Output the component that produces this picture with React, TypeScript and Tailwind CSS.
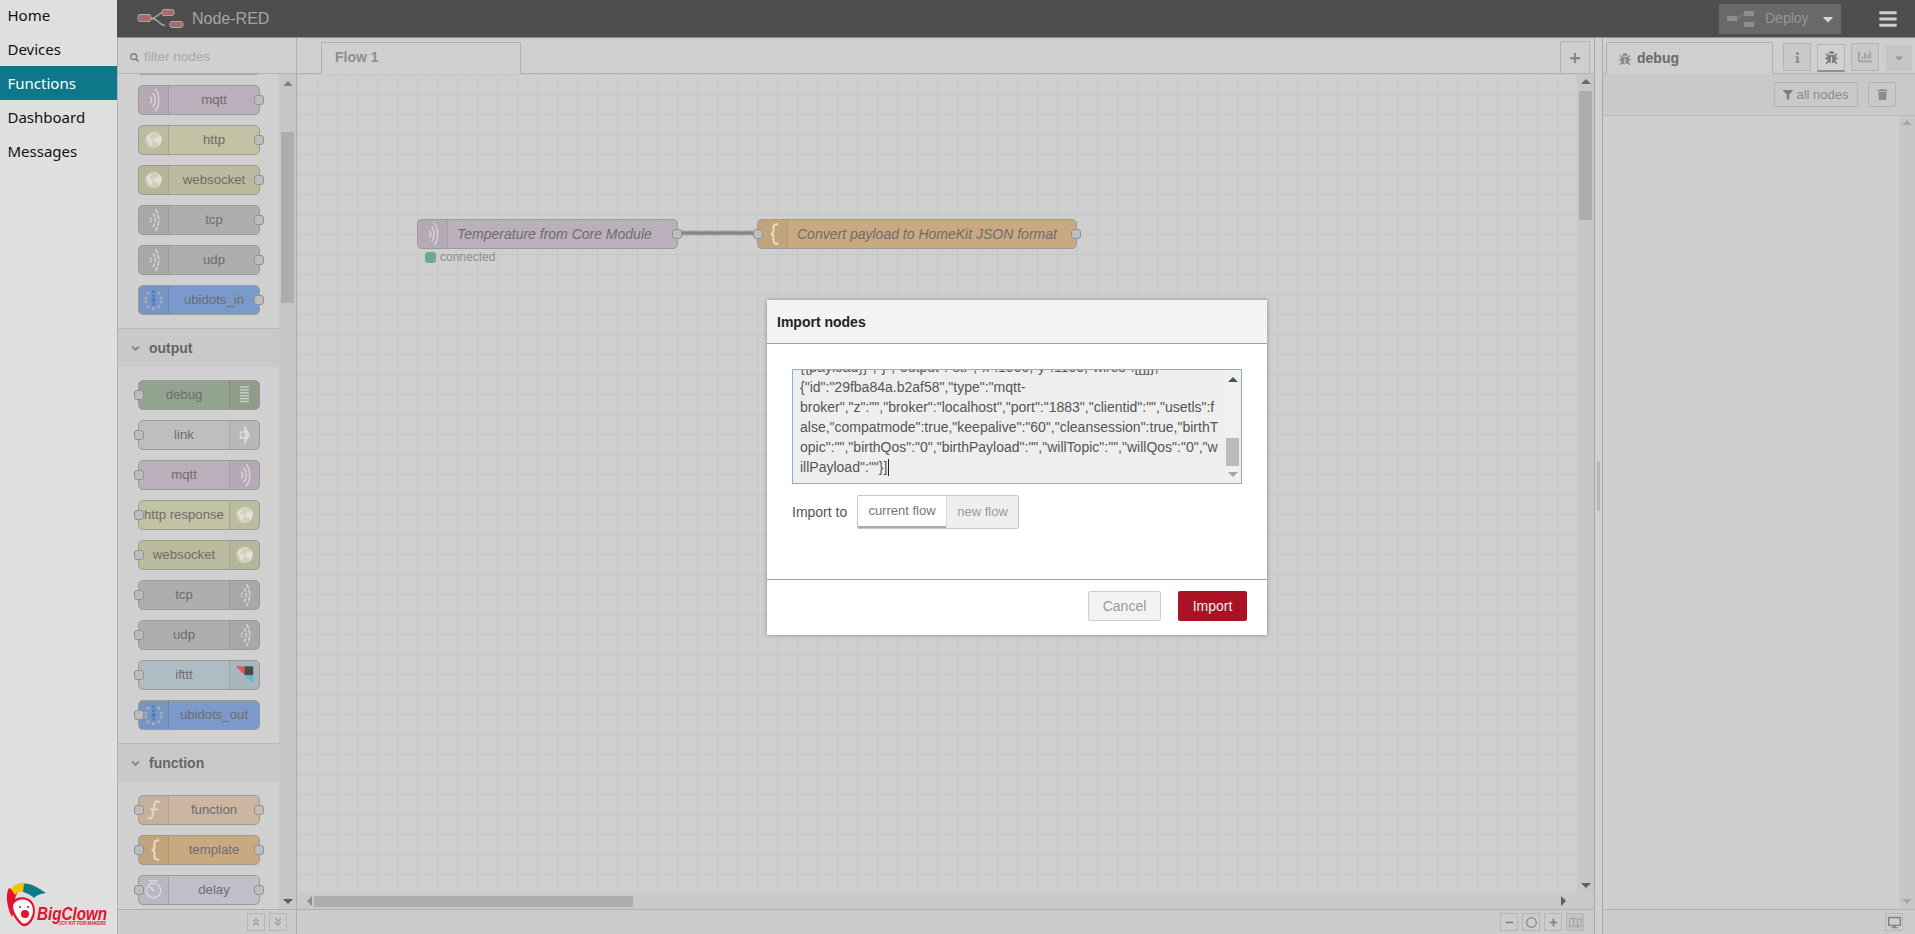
import React from "react";
import {
  FaAngleDoubleDown,
  FaAngleDoubleUp,
  FaAngleDown,
  FaBars,
  FaBug,
  FaCaretDown,
  FaChartBar,
  FaDesktop,
  FaFilter,
  FaInfo,
  FaMinus,
  FaPlus,
  FaRegCircle,
  FaRegMap,
  FaSearch,
  FaTrash,
} from "react-icons/fa";

type IconName = "mqtt" | "globe" | "tcp" | "dots" | "debug" | "link" | "ifttt" | "fn" | "brace" | "delay";

function NodeIcon({ name }: { name: IconName }) {
  if (name === "mqtt") {
    return (
      <svg width="30" height="30" viewBox="0 0 30 30" fill="none" stroke="#d8d4d8" strokeLinecap="round" strokeWidth="1.500">
        <path d="M12 12c1.500 2 1.500 4 0 6" />
        <path d="M14.500 8c3 4 3 10 0 14" />
        <path d="M17 4c4.500 6 4.500 16 0 22" />
      </svg>
    );
  }
  if (name === "tcp") {
    return (
      <svg width="30" height="30" viewBox="0 0 30 30" fill="none" stroke="#d4d4d4" strokeWidth="1.700">
        <path d="M11.500 12.500c1.500 1.500 1.500 3.500 0 5" strokeDasharray="2 1" />
        <path d="M14.500 8c3 4 3 10 0 14" strokeDasharray="4 1.500" />
        <path d="M17 4c4.500 6 4.500 16 0 22" strokeDasharray="5 1.500" />
      </svg>
    );
  }
  if (name === "globe") {
    return (
      <svg width="30" height="30" viewBox="0 0 30 30">
        <circle cx="15" cy="15" r="8.500" fill="#d0d0bd" />
        <path d="M8 12c2-1 3-3 5-3 0 2-2 3-3 4 1 2 4 1 5 3-1 2-2 2-2 5-2-1-3-3-3-5-1-1-2-2-2-4z" fill="#e2e2d8" />
        <path d="M14 7c3 0 6 1 8 4-2 1-5 1-6 3-1 3 3 4 4 4 1 1 0 3-1 4 3-1 4-5 4-7l1-1c0-1-1-3-2-4-2-2-5-4-8-3z" fill="#e2e2d8" />
      </svg>
    );
  }
  if (name === "dots") {
    const light = [
      [9.500, 8],
      [20.500, 8],
      [7, 13],
      [23, 13],
      [7, 17],
      [23, 17],
      [9.500, 22],
      [20.500, 22],
      [15, 24],
    ];
    const blue = [
      [15, 6.500, 1.500],
      [15, 10.500, 1.500],
      [15, 15, 2.200],
      [15, 19.500, 1.500],
    ];
    return (
      <svg width="30" height="30" viewBox="0 0 30 30">
        {light.map(([x, y], i) => (
          <circle key={i} cx={x} cy={y} r="1.700" fill="#a5acba" />
        ))}
        {blue.map(([x, y, r], i) => (
          <circle key={i} cx={x} cy={y} r={r} fill="#3f84bd" />
        ))}
      </svg>
    );
  }
  if (name === "debug") {
    return (
      <svg width="30" height="30" viewBox="0 0 30 30" fill="#c9d1c6">
        <rect x="10.500" y="6" width="9" height="1.500" />
        <rect x="10.500" y="9" width="9" height="1.500" />
        <rect x="10.500" y="12" width="9" height="1.500" />
        <rect x="10.500" y="15" width="9" height="1.500" />
        <rect x="10.500" y="18" width="9" height="1.500" />
        <rect x="10.500" y="21" width="9" height="1.500" />
      </svg>
    );
  }
  if (name === "link") {
    return (
      <svg width="30" height="30" viewBox="0 0 30 30" fill="#dcdcdc">
        <path d="M14 4l7 11-7 11 1-7-5 0 0-8 5 0z" />
        <circle cx="13.500" cy="15" r="2.500" fill="#bdbdbd" />
      </svg>
    );
  }
  if (name === "ifttt") {
    return (
      <svg width="30" height="30" viewBox="0 0 30 30">
        <path d="M6 6h9v9z" fill="#d9595f" />
        <rect x="15" y="6" width="9" height="9" fill="#4b4b4b" />
        <path d="M15 15h9v9z" fill="#57bcd0" />
      </svg>
    );
  }
  if (name === "fn") {
    return (
      <svg width="30" height="30" viewBox="0 0 30 30" fill="none" stroke="#e2dacd" strokeWidth="2" strokeLinecap="round">
        <path d="M21 6.500c-3-1.500-4.500 0-5 3l-2 11c-.5 3-2 4-4 3" />
        <path d="M12 14.500h7" />
      </svg>
    );
  }
  if (name === "brace") {
    return (
      <svg width="30" height="30" viewBox="0 0 30 30" fill="none" stroke="#e6dccb" strokeWidth="2" strokeLinecap="round">
        <path d="M20 5c-3 0-4 1-4 3v4c0 2-1 3-3 3 2 0 3 1 3 3v4c0 2 1 3 4 3" />
      </svg>
    );
  }
  return (
    <svg width="30" height="30" viewBox="0 0 30 30" fill="none" stroke="#d9d7de" strokeWidth="1.500" strokeLinecap="round">
      <circle cx="15" cy="15.500" r="7.500" />
      <path d="M15 15.500l-4-4" />
      <path d="M11 5.500h8" />
    </svg>
  );
}

function Port({ side }: { side: "left" | "right" }) {
  return (
    <span
      className={`absolute top-[9px] h-[10px] w-[10px] rounded-[3px] border border-[#929292] bg-[#bdbdbd] ${
        side === "left" ? "left-[-5px]" : "right-[-5px]"
      }`}
    />
  );
}

type PaletteNode = {
  label: string;
  color: string;
  icon: IconName;
  right?: boolean;
  input?: boolean;
  output?: boolean;
};

function PaletteItem({ node }: { node: PaletteNode }) {
  return (
    <div className={`relative flex h-[30px] w-[122px] rounded-[5px] border border-[#9b9b9b] ${node.color}`}>
      {node.right ? null : (
        <span className="flex w-[30px] shrink-0 items-center justify-center border-r border-[#00000018] bg-[#00000008]">
          <NodeIcon name={node.icon} />
        </span>
      )}
      <span className="flex-1 truncate text-center text-[13.200px] leading-[28px] text-[#6d6d6d]">{node.label}</span>
      {node.right ? (
        <span className="flex w-[30px] shrink-0 items-center justify-center border-l border-[#00000018] bg-[#00000008]">
          <NodeIcon name={node.icon} />
        </span>
      ) : null}
      {node.input ? <Port side="left" /> : null}
      {node.output ? <Port side="right" /> : null}
    </div>
  );
}

const inputNodes: PaletteNode[] = [
  { label: "mqtt", color: "bg-[#baafba]", icon: "mqtt", output: true },
  { label: "http", color: "bg-[#c2c2a4]", icon: "globe", output: true },
  { label: "websocket", color: "bg-[#bbbb9e]", icon: "globe", output: true },
  { label: "tcp", color: "bg-[#aeaeae]", icon: "tcp", output: true },
  { label: "udp", color: "bg-[#aeaeae]", icon: "tcp", output: true },
  { label: "ubidots_in", color: "bg-[#7b9acb]", icon: "dots", output: true },
];

const outputNodes: PaletteNode[] = [
  { label: "debug", color: "bg-[#92a38f]", icon: "debug", right: true, input: true },
  { label: "link", color: "bg-[#bebebe]", icon: "link", right: true, input: true },
  { label: "mqtt", color: "bg-[#baafba]", icon: "mqtt", right: true, input: true },
  { label: "http response", color: "bg-[#c2c2a4]", icon: "globe", right: true, input: true },
  { label: "websocket", color: "bg-[#bbbb9e]", icon: "globe", right: true, input: true },
  { label: "tcp", color: "bg-[#aeaeae]", icon: "tcp", right: true, input: true },
  { label: "udp", color: "bg-[#aeaeae]", icon: "tcp", right: true, input: true },
  { label: "ifttt", color: "bg-[#aebcc4]", icon: "ifttt", right: true, input: true },
  { label: "ubidots_out", color: "bg-[#7b9acb]", icon: "dots", input: true },
];

const functionNodes: PaletteNode[] = [
  { label: "function", color: "bg-[#ccb6a1]", icon: "fn", input: true, output: true },
  { label: "template", color: "bg-[#c8a981]", icon: "brace", input: true, output: true },
  { label: "delay", color: "bg-[#c1bdc9]", icon: "delay", input: true, output: true },
];

function Section({ title, nodes }: { title: string; nodes: PaletteNode[] }) {
  return (
    <div>
      <div className="flex h-[39px] items-center border-t border-[#b9b9b9] bg-[#c9c9c9] pl-[11px] text-[14px] font-bold text-[#666666]">
        <FaAngleDown className="mr-[7px] h-[13px] w-[13px] text-[#8a8a8a]" />
        {title}
      </div>
      <div className="flex flex-col gap-[10px] pb-[13px] pl-[20px] pt-[13px]">
        {nodes.map((n) => (
          <PaletteItem key={n.label + n.icon} node={n} />
        ))}
      </div>
    </div>
  );
}

function Tri({ dir, className }: { dir: "up" | "down" | "left" | "right"; className: string }) {
  const points = {
    up: "0,8 5,3 10,8",
    down: "0,3 10,3 5,8",
    left: "7,0 7,10 2,5",
    right: "3,0 3,10 8,5",
  }[dir];
  return (
    <svg width="10" height="10" viewBox="0 0 10 10" className={className}>
      <polygon points={points} />
    </svg>
  );
}

function BigClownLogo() {
  return (
    <svg width="110" height="64" viewBox="0 0 110 64" className="block">
      <path d="M9 18c-4 6-2 20 3 29l3-10c-1-6 0-11 3-15z" fill="#e3122d" />
      <path d="M11 19c4-6 11-7 16-6l-4 9c-3-1-6 0-8 3z" fill="#f5c400" />
      <path d="M24 14c7-1 14 4 22 9-6 1-9 2-12 5-3-3-7-5-11-6z" fill="#0b7c8a" />
      <path d="M11 36c0-8 11-11 18-7 7 4 7 14 4 20-3 6-8 9-12 6-5-4-10-12-10-19z" fill="#e3122d" />
      <path d="M13 36c1-6 10-8 15-5 6 3 6 12 3 17-2 4-6 7-9 5-4-4-9-11-9-17z" fill="#f8f8f8" />
      <circle cx="25" cy="44" r="4" fill="#e3122d" />
      <circle cx="20" cy="37" r="1" fill="#444444" />
      <circle cx="28" cy="37" r="1" fill="#444444" />
      <text x="37" y="50" fontFamily="Liberation Sans" fontStyle="italic" fontWeight="700" fontSize="19" fill="#e3122d" textLength="70" lengthAdjust="spacingAndGlyphs">
        BigClown
      </text>
      <text x="59" y="55" fontFamily="Liberation Sans" fontStyle="italic" fontWeight="700" fontSize="4.600" fill="#e3122d" textLength="47" lengthAdjust="spacingAndGlyphs">
        JOY KIT FOR MAKERS
      </text>
    </svg>
  );
}

function NodeRedLogo() {
  return (
    <svg width="48" height="22" viewBox="0 0 48 22" fill="none">
      <path d="M14 10.500c6 0 8-6 12-6M14 10.500c7 0 9 7 14 7" stroke="#a8a8a8" strokeWidth="1.500" />
      <rect x="1" y="6.500" width="13" height="7" rx="2" fill="#a66b6b" stroke="#a8a8a8" />
      <rect x="25" y="1.500" width="12" height="6" rx="2" fill="#a66b6b" stroke="#a8a8a8" />
      <rect x="33" y="13.500" width="13" height="6" rx="2" fill="#a66b6b" stroke="#a8a8a8" />
    </svg>
  );
}

function IconBox({ children, className = "" }: { children: React.ReactNode; className?: string }) {
  return (
    <span className={`flex h-[18px] w-[18px] items-center justify-center border border-[#b5b5b5] text-[#a0a0a0] ${className}`}>
      {children}
    </span>
  );
}

function FlowNode({
  label,
  color,
  icon,
  input,
  className,
}: {
  label: string;
  color: string;
  icon: IconName;
  input?: boolean;
  className: string;
}) {
  return (
    <div className={`absolute top-[145px] flex h-[30px] rounded-[5px] border border-[#9b9b9b] ${color} ${className}`}>
      <span className="flex w-[30px] shrink-0 items-center justify-center border-r border-[#00000010] bg-[#00000008]">
        <NodeIcon name={icon} />
      </span>
      <span className="flex-1 whitespace-nowrap pl-[9px] text-[14px] italic leading-[28px] text-[#6d6d6d]">{label}</span>
      {input ? <Port side="left" /> : null}
      <Port side="right" />
    </div>
  );
}

const importLines = [
  '{{payload}}","}","output":"str","x":1000,"y":1100,"wires":[[]]},',
  '{"id":"29fba84a.b2af58","type":"mqtt-',
  'broker","z":"","broker":"localhost","port":"1883","clientid":"","usetls":f',
  'alse,"compatmode":true,"keepalive":"60","cleansession":true,"birthT',
  'opic":"","birthQos":"0","birthPayload":"","willTopic":"","willQos":"0","w',
];

function ImportDialog() {
  return (
    <div className="absolute left-[650px] top-[262px] z-10 flex h-[335px] w-[500px] flex-col bg-white shadow-[0_0_4px_rgba(0,0,0,0.35)]">
      <div className="flex h-[44px] shrink-0 items-center border-b border-[#a0a0a0] bg-[#f3f3f3] pl-[10px] pt-px text-[14px] font-bold text-[#222222]">
        Import nodes
      </div>
      <div className="flex-1 px-[25px] pt-[25px]">
        <div className="flex h-[115px] w-[450px] border border-[#85ace3] bg-[#eeeeee]">
          <div className="flex flex-1 flex-col justify-end overflow-hidden pb-[6px] pl-[7px] text-[14px] leading-[20px] text-[#555555]">
            {importLines.map((line) => (
              <div key={line} className="whitespace-nowrap">
                {line}
              </div>
            ))}
            <div className="flex items-center whitespace-nowrap">
              illPayload":""{"}]"}
              <span className="ml-px inline-block h-[17px] w-px bg-[#222222]" />
            </div>
          </div>
          <div className="flex w-[17px] shrink-0 flex-col items-center justify-between bg-[#f0f0f0] py-[4px]">
            <Tri dir="up" className="fill-[#505050]" />
            <div className="mt-auto h-[28px] w-[13px] bg-[#bcbcbc]" />
            <Tri dir="down" className="mt-[3px] fill-[#a3a3a3]" />
          </div>
        </div>
        <div className="mt-[11px] flex items-center">
          <span className="w-[65px] text-[14px] text-[#555555]">Import to</span>
          <div className="flex h-[34px] overflow-hidden rounded-[2px] border border-[#c8c8c8] text-[13px]">
            <span className="flex w-[88px] items-center justify-center border-b-[2px] border-b-[#aaaaaa] bg-white text-[#777777]">
              current flow
            </span>
            <span className="flex w-[72px] items-center justify-center border-l border-[#d8d8d8] bg-[#efefef] text-[#999999]">
              new flow
            </span>
          </div>
        </div>
      </div>
      <div className="flex h-[56px] shrink-0 items-start justify-end gap-[17px] border-t border-[#a0a0a0] pr-[20px] pt-[11px]">
        <span className="flex h-[30px] w-[73px] items-center justify-center rounded-[2px] border border-[#cfcfcf] bg-[#f3f3f3] text-[14px] text-[#999999]">
          Cancel
        </span>
        <span className="flex h-[30px] w-[69px] items-center justify-center rounded-[2px] bg-[#ab1223] text-[14px] text-[#eeeeee]">
          Import
        </span>
      </div>
    </div>
  );
}

const navItems = ["Home", "Devices", "Functions", "Dashboard", "Messages"];

export default function App() {
  return (
    <div className="flex h-[934px] w-[1915px] overflow-hidden bg-[#dfdfdf] font-['Liberation_Sans',sans-serif]">
      <nav className="flex w-[117px] shrink-0 flex-col">
        <div className="-mt-[2px]">
          {navItems.map((item) => (
            <div
              key={item}
              className={`flex h-[34px] items-center pl-[7.500px] font-['Noto_Sans',sans-serif] text-[15px] ${
                item === "Functions" ? "bg-[#0c7889] text-white" : "text-[#111111]"
              }`}
            >
              {item}
            </div>
          ))}
        </div>
        <div className="mt-auto">
          <BigClownLogo />
        </div>
      </nav>

      <main className="flex min-w-0 flex-1 flex-col">
        <header className="flex h-[38px] shrink-0 items-center border-b border-[#8f8f8f] bg-[#4e4e4e] pl-[20px]">
          <NodeRedLogo />
          <span className="ml-[7px] text-[16px] text-[#a5a5a5]">Node-RED</span>
          <div className="ml-auto flex h-[30px] w-[122px] items-center bg-[#696969] pl-[8px]">
            <svg width="28" height="18" viewBox="0 0 28 18" fill="#8e8e8e">
              <rect x="0" y="6" width="10" height="5" />
              <rect x="17" y="1" width="10" height="5" />
              <rect x="17" y="12" width="10" height="5" />
              <path d="M10 8.500l7-5" stroke="#8e8e8e" strokeWidth="1" />
            </svg>
            <span className="ml-[10px] text-[14px] text-[#969696]">Deploy</span>
            <FaCaretDown className="ml-[11px] h-[16px] w-[16px] text-[#d8d8d8]" />
          </div>
          <FaBars className="ml-[37px] mr-[17px] h-[20px] w-[20px] text-[#cfcfcf]" />
        </header>

        <div className="relative flex min-h-0 flex-1">
          {/* palette */}
          <aside className="flex w-[180px] shrink-0 flex-col border-x border-[#b0b0b0] bg-[#d0d0d0]">
            <div className="flex h-[36px] shrink-0 items-center border-b border-[#b0b0b0] pl-[12px] pt-[3px] text-[13.500px] text-[#a8a8a8]">
              <FaSearch className="mr-[5px] h-[9px] w-[9px] text-[#7d7d7d]" />
              filter nodes
            </div>
            <div className="flex min-h-0 flex-1 overflow-hidden">
              <div className="min-w-0 flex-1 overflow-hidden">
                <div className="ml-[22px] h-px w-[117px] bg-[#a0a0a0]" />
                <div className="flex flex-col gap-[10px] pb-[13px] pl-[20px] pt-[10px]">
                  {inputNodes.map((n) => (
                    <PaletteItem key={n.label} node={n} />
                  ))}
                </div>
                <Section title="output" nodes={outputNodes} />
                <Section title="function" nodes={functionNodes} />
              </div>
              <div className="flex w-[17px] shrink-0 flex-col items-center bg-[#c6c6c6]">
                <Tri dir="up" className="mt-[4px] fill-[#7e7e7e]" />
                <div className="mt-[44px] h-[171px] w-[13px] bg-[#adadad]" />
                <Tri dir="down" className="mb-[3px] mt-auto fill-[#5e5e5e]" />
              </div>
            </div>
            <div className="flex h-[25px] shrink-0 items-start justify-end gap-[4px] border-t border-[#b0b0b0] bg-[#cccccc] pr-[9px] pt-[3px]">
              <IconBox>
                <FaAngleDoubleUp className="h-[10px] w-[10px]" />
              </IconBox>
              <IconBox>
                <FaAngleDoubleDown className="h-[10px] w-[10px]" />
              </IconBox>
            </div>
          </aside>

          {/* workspace */}
          <section className="flex w-[1298px] shrink-0 flex-col border-r border-[#a8a8a8]">
            <div className="flex h-[36px] shrink-0 items-end justify-between border-b border-[#b0b0b0] bg-[#cfcfcf] pl-[24px] pr-[4px]">
              <div className="mb-[-1px] flex h-[32px] w-[200px] items-center border-x border-t border-[#b0b0b0] bg-[#d0d0d0] pb-[2px] pl-[13px] text-[14px] font-bold text-[#8e8e8e]">
                Flow 1
              </div>
              <div className="flex h-[32px] w-[30px] items-center justify-center border-x border-t border-[#b5b5b5]">
                <FaPlus className="h-[12px] w-[12px] text-[#888888]" />
              </div>
            </div>
            <div className="flex min-h-0 flex-1">
              <div className="relative min-w-0 flex-1 bg-[#cfcfcf] bg-[linear-gradient(to_right,#c7c7c7_1px,transparent_1px),linear-gradient(to_bottom,#c7c7c7_1px,transparent_1px)] bg-[size:20px_20px]">
                <svg className="absolute left-[384px] top-[156px]" width="72" height="6" viewBox="0 0 72 6">
                  <rect x="0" y="0.500" width="72" height="5" fill="#aaaaaa" />
                  <rect x="0" y="1.500" width="72" height="3" fill="#858585" />
                </svg>
                <FlowNode
                  label="Temperature from Core Module"
                  color="bg-[#baafba]"
                  icon="mqtt"
                  className="left-[120px] w-[261px]"
                />
                <FlowNode
                  label="Convert payload to HomeKit JSON format"
                  color="bg-[#c8a981]"
                  icon="brace"
                  input
                  className="left-[460px] w-[320px]"
                />
                <div className="absolute left-[128px] top-[178px] flex items-center">
                  <span className="h-[11px] w-[11px] rounded-[3px] bg-[#6da891]" />
                  <span className="ml-[4px] text-[12px] leading-[11px] text-[#8d8d8d]">connected</span>
                </div>
              </div>
              <div className="flex w-[17px] shrink-0 flex-col items-center bg-[#c7c7c7]">
                <Tri dir="up" className="mt-[2px] fill-[#6a6a6a]" />
                <div className="mt-[5px] h-[129px] w-[13px] bg-[#adadad]" />
                <Tri dir="down" className="mb-[3px] mt-auto fill-[#5e5e5e]" />
              </div>
            </div>
            <div className="flex h-[16px] shrink-0 items-center bg-[#c9c9c9] pl-[8px] pr-[26px]">
              <Tri dir="left" className="fill-[#8d8d8d]" />
              <div className="ml-[-1px] h-[11px] w-[319px] bg-[#adadad]" />
              <Tri dir="right" className="ml-auto fill-[#5e5e5e]" />
            </div>
            <div className="flex h-[25px] shrink-0 items-start justify-end gap-[4px] border-t border-[#b0b0b0] bg-[#cccccc] pr-[10px] pt-[3px]">
              <IconBox>
                <FaMinus className="h-[9px] w-[9px] text-[#808080]" />
              </IconBox>
              <IconBox>
                <FaRegCircle className="h-[11px] w-[11px] text-[#808080]" />
              </IconBox>
              <IconBox>
                <FaPlus className="h-[9px] w-[9px] text-[#808080]" />
              </IconBox>
              <IconBox className="bg-[#c3c3c3]">
                <FaRegMap className="h-[13px] w-[13px] text-[#a4a4a4]" />
              </IconBox>
            </div>
          </section>

          {/* separator */}
          <div className="flex w-[8px] shrink-0 items-center justify-center border-r border-[#a8a8a8] bg-[#d0d0d0]">
            <div className="h-[50px] w-[3px] bg-[#b8b8b8]" />
          </div>

          {/* sidebar */}
          <aside className="flex min-w-0 flex-1 flex-col bg-[#cecece]">
            <div className="flex h-[36px] shrink-0 items-end border-b border-[#b0b0b0] bg-[#cfcfcf] pl-[3px]">
              <div className="mb-[-1px] flex h-[32px] w-[167px] items-center border-x border-t border-[#b0b0b0] bg-[#cfcfcf] pl-[12px] text-[14px] font-bold text-[#6a6a6a]">
                <FaBug className="mr-[6px] h-[12px] w-[12px] text-[#8a8a8a]" />
                debug
              </div>
              <div className="mb-[2px] ml-[10px] flex h-[28px] w-[28px] items-center justify-center border border-[#b5b5b5] bg-[#c9c9c9]">
                <FaInfo className="h-[11px] w-[11px] text-[#8f8f8f]" />
              </div>
              <div className="mb-[1px] ml-[6px] flex h-[28px] w-[28px] items-center justify-center border border-b-[2px] border-[#b5b5b5] border-b-[#8f8f8f] bg-[#d0d0d0]">
                <FaBug className="h-[13px] w-[13px] text-[#7d7d7d]" />
              </div>
              <div className="mb-[2px] ml-[6px] flex h-[28px] w-[28px] items-center justify-center border border-[#b5b5b5] bg-[#c9c9c9]">
                <FaChartBar className="h-[14px] w-[14px] text-[#a0a0a0]" />
              </div>
              <div className="mb-[2px] ml-[7px] flex h-[26px] w-[26px] items-center justify-center bg-[#c5c5c5]">
                <FaCaretDown className="h-[12px] w-[12px] text-[#9a9a9a]" />
              </div>
            </div>
            <div className="flex h-[42px] shrink-0 items-center justify-end gap-[10px] border-b border-[#bcbcbc] bg-[#c9c9c9] pr-[19px]">
              <div className="flex h-[25px] w-[84px] items-center justify-center border border-[#b5b5b5] text-[13px] text-[#8a8a8a]">
                <FaFilter className="mr-[3px] h-[10px] w-[10px] text-[#7d7d7d]" />
                all nodes
              </div>
              <div className="flex h-[25px] w-[28px] items-center justify-center border border-[#b5b5b5]">
                <FaTrash className="h-[11px] w-[11px] text-[#8a8a8a]" />
              </div>
            </div>
            <div className="flex min-h-0 flex-1 justify-end">
              <div className="flex w-[16px] flex-col items-center justify-between bg-[#c7c7c7] py-[1px]">
                <Tri dir="up" className="fill-[#a5a5a5]" />
                <Tri dir="down" className="mb-[2px] fill-[#a5a5a5]" />
              </div>
            </div>
            <div className="flex h-[25px] shrink-0 items-start justify-end border-t border-[#b0b0b0] bg-[#cccccc] pr-[12px] pt-[3px]">
              <IconBox>
                <FaDesktop className="h-[13px] w-[13px] text-[#808080]" />
              </IconBox>
            </div>
          </aside>

          <ImportDialog />
        </div>
      </main>
    </div>
  );
}
